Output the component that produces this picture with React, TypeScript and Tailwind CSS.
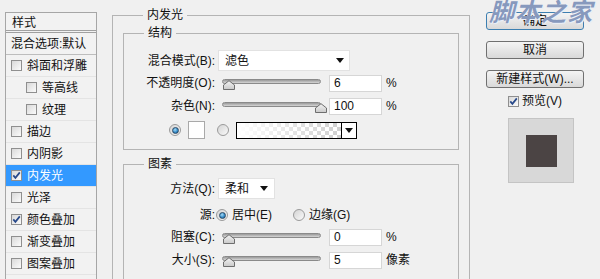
import React from "react";

const font = "font-['Liberation_Sans','Noto_Sans_CJK_SC',sans-serif]";

const Checkbox: React.FC<{ checked?: boolean }> = ({ checked }) => (
  <span className="w-[11px] h-[11px] shrink-0 border border-[#8f8f8f] bg-linear-to-br from-[#d9d9d9] to-[#fbfbfb] flex items-center justify-center">
    {checked && (
      <svg width="9" height="9" viewBox="0 0 9 9">
        <path d="M1.3 4.4 L3.4 6.9 L7.8 1.4" stroke="#28498a" strokeWidth="1.7" fill="none" />
      </svg>
    )}
  </span>
);

const Radio: React.FC<{ checked?: boolean }> = ({ checked }) => (
  <span className="w-[12px] h-[12px] shrink-0 rounded-full border border-[#9a9a9a] bg-linear-to-br from-[#d4d4d4] to-[#fafafa] flex items-center justify-center">
    {checked && (
      <span className="w-[7px] h-[7px] rounded-full border border-[#2b4a66] bg-[radial-gradient(circle_at_40%_35%,#a6dcf8,#2f86c4_60%,#1b4f7a)]" />
    )}
  </span>
);

const Arrow = () => (
  <svg width="8" height="5" viewBox="0 0 8 5">
    <path d="M0 0 H8 L4 5 Z" fill="#111" />
  </svg>
);

const Slider: React.FC<{ at: number }> = ({ at }) => (
  <div className="relative w-[99px] h-[18px] shrink-0">
    <div className="absolute left-0 right-0 top-[5px] h-[5px] rounded-full border border-[#8a8a8a] bg-linear-to-b from-[#9a9a9a] to-[#d6d6d6]" />
    <svg className="absolute top-[6px]" style={{ left: at }} width="12" height="10" viewBox="0 0 12 10">
      <defs>
        <linearGradient id="thumb" x1="0" y1="0" x2="0" y2="1">
          <stop offset="0" stopColor="#f4f4f4" />
          <stop offset="1" stopColor="#c9c9c9" />
        </linearGradient>
      </defs>
      <path d="M0.5 9.5 V5 L6 0.7 L11.5 5 V9.5 Z" fill="url(#thumb)" stroke="#6e6e6e" />
    </svg>
  </div>
);

const Field: React.FC<{ value: string }> = ({ value }) => (
  <div className="w-[53px] h-[17px] shrink-0 bg-white border border-[#d6d6d6] pl-[4px] text-[12px] leading-[15px]">
    {value}
  </div>
);

const Label: React.FC<{ text: string }> = ({ text }) => (
  <span className="w-[91px] shrink-0 text-right text-[12px] leading-[18px]">{text}</span>
);

const SliderRow: React.FC<{ label: string; value: string; at: number; unit: string; className: string }> = ({
  label,
  value,
  at,
  unit,
  className,
}) => (
  <div className={`flex items-center h-[18px] ${className}`}>
    <Label text={label} />
    <div className="ml-[7px]">
      <Slider at={at} />
    </div>
    <div className="ml-[8px]">
      <Field value={value} />
    </div>
    <span className="ml-[4px] text-[12px] leading-[18px]">{unit}</span>
  </div>
);

const styles = [
  { name: "斜面和浮雕", on: false, indent: false },
  { name: "等高线", on: false, indent: true },
  { name: "纹理", on: false, indent: true },
  { name: "描边", on: false, indent: false },
  { name: "内阴影", on: false, indent: false },
  { name: "内发光", on: true, indent: false, active: true },
  { name: "光泽", on: false, indent: false },
  { name: "颜色叠加", on: true, indent: false },
  { name: "渐变叠加", on: false, indent: false },
  { name: "图案叠加", on: false, indent: false },
];

const Legend: React.FC<{ text: string }> = ({ text }) => (
  <legend className="ml-[20px] px-[4px] text-[12px] leading-[16px]">{text}</legend>
);

export default function App() {
  return (
    <div className={`w-[600px] h-[279px] overflow-hidden bg-[#f0f0f0] text-[#111] flex relative ${font}`}>
      {/* style list */}
      <div className="ml-[5px] mt-[12px] w-[92px] h-[300px] shrink-0 border border-[#a6a6a6] bg-[#f2f2f2]">
        <div className="h-[20px] pl-[6px] text-[12px] leading-[20px] border-b-[3px] border-double border-[#a0a0a0]">样式</div>
        <div className="h-[22px] pl-[5px] text-[12px] leading-[22px] border-b border-[#bdbdbd] whitespace-nowrap">
          混合选项:默认
        </div>
        {styles.map((s) => (
          <div
            key={s.name}
            className={`h-[22px] flex items-center border-b border-[#e4e4e4] ${s.indent ? "pl-[20px]" : "pl-[5px]"} ${
              s.active ? "bg-[#3399ff] text-white" : ""
            }`}
          >
            <Checkbox checked={s.on} />
            <span className="ml-[5px] text-[12px] leading-[22px] whitespace-nowrap">{s.name}</span>
          </div>
        ))}
      </div>

      {/* settings */}
      <fieldset className="ml-[15px] mt-[7px] w-[356px] h-[300px] shrink-0 border border-[#b4b4b4] px-[10px]">
        <Legend text="内发光" />
        <fieldset className="mt-[2px] w-[336px] border border-[#b4b4b4] pt-[9px] pb-[10px]">
          <Legend text="结构" />
          <div className="flex items-center h-[21px]">
            <Label text="混合模式(B):" />
            <div className="ml-[3px] w-[132px] h-[21px] bg-white border border-[#e2e2e2] flex items-center justify-between pl-[6px] pr-[5px] text-[12px]">
              <span>滤色</span>
              <Arrow />
            </div>
          </div>
          <SliderRow className="mt-[3px]" label="不透明度(O):" value="6" at={1} unit="%" />
          <SliderRow className="mt-[5px]" label="杂色(N):" value="100" at={93} unit="%" />
          <div className="mt-[6px] h-[18px] flex items-center">
            <span className="ml-[45px]">
              <Radio checked />
            </span>
            <span className="ml-[7px] w-[17px] h-[18px] bg-white border border-[#a9a9a9]" />
            <span className="ml-[12px]">
              <Radio />
            </span>
            <div className="ml-[7px] w-[121px] h-[17px] border border-black flex">
              <svg className="flex-1 h-full" preserveAspectRatio="none" viewBox="0 0 104 15">
                <defs>
                  <pattern id="chk" width="8" height="8" patternUnits="userSpaceOnUse">
                    <rect width="8" height="8" fill="#fff" />
                    <rect width="4" height="4" fill="#cfcfcf" />
                    <rect x="4" y="4" width="4" height="4" fill="#cfcfcf" />
                  </pattern>
                  <linearGradient id="fade" x1="0" y1="0" x2="1" y2="0">
                    <stop offset="0" stopColor="#fff" stopOpacity="1" />
                    <stop offset="1" stopColor="#fff" stopOpacity="0" />
                  </linearGradient>
                </defs>
                <rect width="104" height="15" fill="url(#chk)" />
                <rect width="104" height="15" fill="url(#fade)" />
              </svg>
              <div className="w-[15px] border-l border-black bg-white flex items-center justify-center">
                <Arrow />
              </div>
            </div>
          </div>
        </fieldset>

        <fieldset className="mt-[6px] w-[336px] h-[200px] border border-[#b4b4b4] pt-[6px]">
          <Legend text="图素" />
          <div className="flex items-center h-[21px]">
            <Label text="方法(Q):" />
            <div className="ml-[3px] w-[57px] h-[21px] bg-white border border-[#e2e2e2] flex items-center justify-between pl-[6px] pr-[6px] text-[12px]">
              <span>柔和</span>
              <Arrow />
            </div>
          </div>
          <div className="mt-[7px] h-[18px] flex items-center text-[12px]">
            <Label text="源:" />
            <span className="ml-[1px]">
              <Radio checked />
            </span>
            <span className="ml-[4px]">居中(E)</span>
            <span className="ml-[21px]">
              <Radio />
            </span>
            <span className="ml-[4px]">边缘(G)</span>
          </div>
          <SliderRow className="mt-[4px]" label="阻塞(C):" value="0" at={1} unit="%" />
          <SliderRow className="mt-[5px]" label="大小(S):" value="5" at={1} unit="像素" />
        </fieldset>
      </fieldset>

      {/* buttons */}
      <div className="ml-[16px] w-[98px] shrink-0 flex flex-col text-[12px]">
        <button className="mt-[12px] h-[18px] rounded-[3px] border border-[#3c7fb1] bg-linear-to-b from-[#f4f4f4] to-[#d9d9d9] leading-[16px]">
          确定
        </button>
        <button className="mt-[11px] h-[18px] rounded-[3px] border border-[#707070] bg-linear-to-b from-[#f4f4f4] to-[#d9d9d9] leading-[16px]">
          取消
        </button>
        <button className="mt-[11px] h-[18px] rounded-[3px] border border-[#707070] bg-linear-to-b from-[#f4f4f4] to-[#d9d9d9] leading-[16px] whitespace-nowrap">
          新建样式(W)...
        </button>
        <div className="mt-[6px] h-[14px] flex items-center pl-[22px]">
          <Checkbox checked />
          <span className="ml-[3px] leading-[14px]">预览(V)</span>
        </div>
        <div className="mt-[10px] ml-[22px] w-[66px] h-[65px] bg-[#d8d8d8] border border-[#c4c4c4] flex items-center justify-center">
          <div className="w-[31px] h-[32px] bg-[#4b4444]" />
        </div>
      </div>

      <div className="absolute left-[489px] top-[-1px] text-[25px] leading-[26px] italic font-bold text-[#8799bd] tracking-[1px] [text-shadow:0_0_1px_#fff,1px_1px_0_#e8eef8] pointer-events-none whitespace-nowrap">
        脚本之家
      </div>
    </div>
  );
}
